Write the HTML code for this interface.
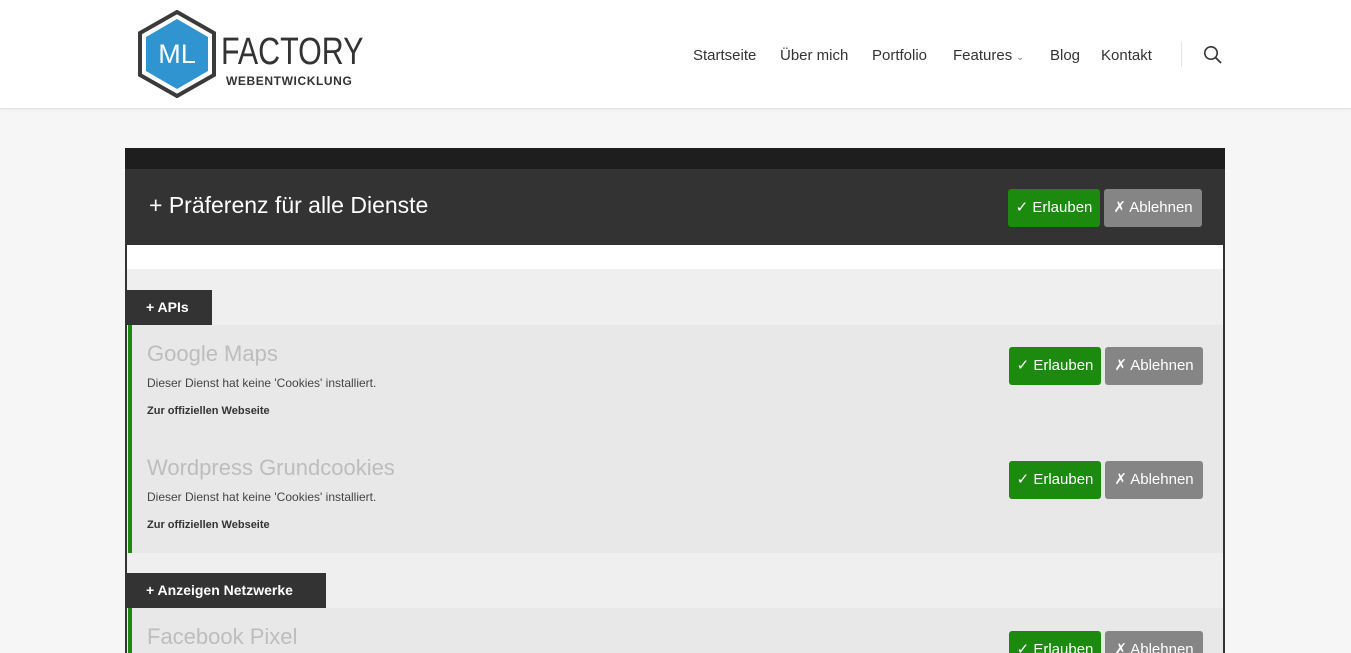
<!DOCTYPE html>
<html style="overflow:hidden;height:653px"><head><meta charset="utf-8"><style>
*{margin:0;padding:0;box-sizing:border-box}
body{width:1351px;height:653px;overflow:hidden;background:#f6f6f6;font-family:"Liberation Sans",sans-serif;position:relative}
.hdr{position:absolute;left:0;top:0;width:1351px;height:109px;background:#fff;border-bottom:1px solid #e4e4e4;box-shadow:0 1px 3px rgba(0,0,0,.05)}
.nav{position:absolute;top:47px;font-size:15px;color:#333}
.a{position:absolute}
.btn{position:absolute;height:38px;border-radius:3px;color:#fff;font-size:15px;line-height:38px;text-align:center}
.g{background:#1c8a0e;width:92px}
.r{background:#858585;width:98px}
.t{position:absolute;left:147px;font-size:22px;color:#bdbdbd}
.d{position:absolute;left:147px;font-size:12px;color:#444}
.l{position:absolute;left:147px;font-size:11px;font-weight:bold;color:#333}
.tab{position:absolute;left:126px;height:35px;background:#333;color:#fff;font-weight:bold;font-size:14px;line-height:35px;padding-left:20px}
</style></head><body>
<div class="hdr">
<svg class="a" style="left:137px;top:10px" width="80" height="88" viewBox="0 0 80 88">
<polygon points="40,2 77,23 77,65 40,86 3,65 3,23" fill="none" stroke="#3a3a3a" stroke-width="4"/>
<polygon points="40,9 71,27 71,61 40,79 9,61 9,27" fill="#2f94d0"/>
<text x="40" y="53" text-anchor="middle" font-family="Liberation Sans" font-size="27" fill="#fff">ML</text>
</svg>
<div class="a" style="left:221px;top:32px;font-size:38px;color:#333;line-height:40px;transform:scaleX(0.8);transform-origin:0 0">FACTORY</div>
<div class="a" style="left:226px;top:74px;font-size:12px;color:#333;letter-spacing:0.6px;font-weight:bold">WEBENTWICKLUNG</div>
<div class="nav" style="left:693px">Startseite</div>
<div class="nav" style="left:780px">Über mich</div>
<div class="nav" style="left:872px">Portfolio</div>
<div class="nav" style="left:953px">Features <span style="font-size:9px;color:#777">&#8964;</span></div>
<div class="nav" style="left:1050px">Blog</div>
<div class="nav" style="left:1101px">Kontakt</div>
<div class="a" style="left:1181px;top:42px;width:1px;height:25px;background:#e4e4e4"></div>
<svg class="a" style="left:1203px;top:45px" width="20" height="20" viewBox="0 0 20 20"><circle cx="8" cy="8" r="6.2" fill="none" stroke="#333" stroke-width="1.6"/><line x1="12.5" y1="12.5" x2="18" y2="18" stroke="#333" stroke-width="1.8"/></svg>
</div>

<div class="a" style="left:125px;top:148px;width:1100px;height:21px;background:#1e1e1e"></div>
<div class="a" style="left:125px;top:169px;width:1100px;height:76px;background:#333"></div>
<div class="a" style="left:149px;top:192px;font-size:23px;color:#fff">+ Präferenz für alle Dienste</div>
<div class="btn g" style="left:1008px;top:189px">✓ Erlauben</div>
<div class="btn r" style="left:1104px;top:189px">✗ Ablehnen</div>

<div class="a" style="left:125px;top:245px;width:1100px;height:408px;background:#fff;border-left:2px solid #333;border-right:2px solid #333"></div>
<div class="a" style="left:127px;top:269px;width:1096px;height:384px;background:#efefef"></div>

<div class="tab" style="top:290px;width:86px">+ APIs</div>
<div class="a" style="left:128px;top:325px;width:1095px;height:228px;background:#e8e8e8;border-left:4px solid #1c8a0e"></div>
<div class="t" style="top:341px">Google Maps</div>
<div class="d" style="top:376px">Dieser Dienst hat keine 'Cookies' installiert.</div>
<div class="l" style="top:405px">Zur offiziellen Webseite</div>
<div class="btn g" style="left:1009px;top:347px">✓ Erlauben</div>
<div class="btn r" style="left:1105px;top:347px">✗ Ablehnen</div>
<div class="t" style="top:455px">Wordpress Grundcookies</div>
<div class="d" style="top:490px">Dieser Dienst hat keine 'Cookies' installiert.</div>
<div class="l" style="top:519px">Zur offiziellen Webseite</div>
<div class="btn g" style="left:1009px;top:461px">✓ Erlauben</div>
<div class="btn r" style="left:1105px;top:461px">✗ Ablehnen</div>

<div class="tab" style="top:573px;width:200px">+ Anzeigen Netzwerke</div>
<div class="a" style="left:128px;top:608px;width:1095px;height:45px;background:#e8e8e8;border-left:4px solid #1c8a0e"></div>
<div class="t" style="top:624px">Facebook Pixel</div>
<div class="btn g" style="left:1009px;top:631px;height:22px;border-radius:3px 3px 0 0">✓ Erlauben</div>
<div class="btn r" style="left:1105px;top:631px;height:22px;border-radius:3px 3px 0 0">✗ Ablehnen</div>
</body></html>
